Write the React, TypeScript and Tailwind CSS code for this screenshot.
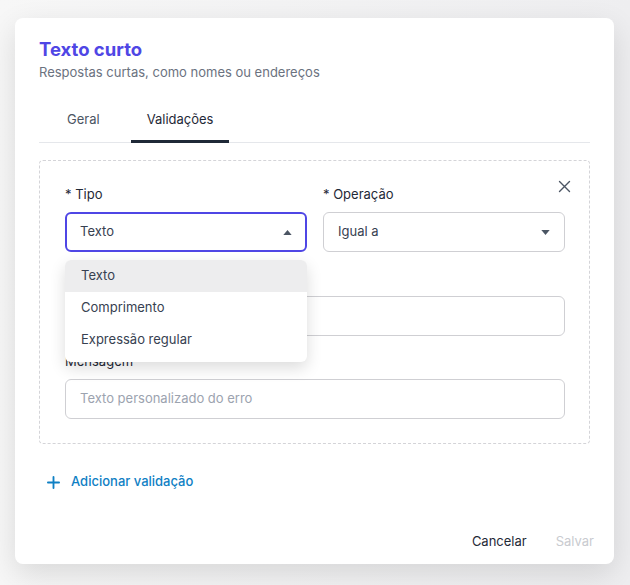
import { useState } from "react";

const font = { fontFamily: "Inter, 'Noto Sans', sans-serif" };

function Caret({ up = false }: { up?: boolean }) {
  return (
    <svg viewBox="0 0 10 6" className="h-[5px] w-[9px] text-[#4b5563]" fill="currentColor">
      {up ? <path d="M0 6 5 0l5 6Z" /> : <path d="M0 0h10L5 6Z" />}
    </svg>
  );
}

function Field({ label, children }: { label?: string; children: React.ReactNode }) {
  return (
    <div className="flex flex-col">
      {label ? (
        <label className="mb-2 text-[13px] leading-5 text-[#1f2937]">{label}</label>
      ) : (
        <div className="mb-2 h-5" />
      )}
      {children}
    </div>
  );
}

export default function App() {
  const [aba, setAba] = useState("Validações");
  const opcoes = ["Texto", "Comprimento", "Expressão regular"];

  return (
    <div
      className="flex h-[585px] w-[630px] items-start bg-gradient-to-r from-[#f7f7f7] to-[#eeeef0] pl-[15px] pt-[18px]"
      style={font}
    >
      <div className="flex h-[546px] w-[599px] flex-col rounded-lg bg-white px-6 pt-[19px] shadow-[0_10px_30px_rgba(0,0,0,0.12)]">
        <h2 className="text-[18.5px] font-bold leading-6 text-[#4f46e5]">Texto curto</h2>
        <p className="mt-[2px] text-[13px] leading-[18px] text-[#6b7280]">
          Respostas curtas, como nomes ou endereços
        </p>

        <div className="mt-4 flex gap-[15px] border-b border-gray-200 pl-3">
          {["Geral", "Validações"].map((t) => (
            <button
              key={t}
              type="button"
              onClick={() => setAba(t)}
              className={`-mb-px border-b-[3px] px-4 pb-[11px] pt-3 text-[13px] leading-5 ${
                aba === t ? "border-[#1f2937] text-[#1f2937]" : "border-transparent text-[#4b5563]"
              }`}
            >
              {t}
            </button>
          ))}
        </div>

        <div className="relative mt-[17px] rounded-sm border border-dashed border-[#d4d4d8] pb-[24px] pl-[25px] pr-6 pt-[23px]">
          <button type="button" className="absolute right-[17px] top-[18px] text-[#4b5563]" aria-label="Remover">
            <svg viewBox="0 0 24 24" className="h-[15px] w-[15px]" fill="none" stroke="currentColor" strokeWidth="2.2" strokeLinecap="round">
              <path d="M4 4l16 16M20 4 4 20" />
            </svg>
          </button>

          <div className="grid grid-cols-2 gap-x-4">
            <Field label="* Tipo">
              <div className="relative">
                <div className="flex h-10 items-center justify-between rounded-md border-2 border-[#4f46e5] pl-[13px] pr-[13px] text-[13px] text-[#374151]">
                  <span>Texto</span>
                  <Caret up />
                </div>
                <div className="absolute left-0 right-0 top-[48px] z-10 rounded-md bg-white pb-[6px] shadow-[0_6px_16px_rgba(0,0,0,0.14)]">
                  {opcoes.map((o, i) => (
                    <div
                      key={o}
                      className={`flex h-8 items-center px-4 text-[13px] text-[#374151] ${
                        i === 0 ? "rounded-t-md bg-[#ededee]" : ""
                      }`}
                    >
                      {o}
                    </div>
                  ))}
                </div>
              </div>
            </Field>
            <Field label="* Operação">
              <div className="flex h-10 items-center justify-between rounded-md border border-[#cfcfd3] pl-[14px] pr-[14px] text-[13px] text-[#374151]">
                <span>Igual a</span>
                <Caret />
              </div>
            </Field>
          </div>

          <div className="mt-4">
            <Field>
              <div className="h-10 rounded-md border border-[#cfcfd3]" />
            </Field>
          </div>

          <div className="mt-[15px]">
            <Field label="Mensagem">
              <div className="flex h-10 items-center rounded-md border border-[#cfcfd3] px-[14px] text-[13px] text-[#9ca3af]">
                Texto personalizado do erro
              </div>
            </Field>
          </div>
        </div>

        <button type="button" className="mt-[22px] flex h-8 items-center gap-[11px] self-start pl-2 text-[13px] font-medium text-[#0f80c4]">
          <svg viewBox="0 0 14 14" className="h-[13px] w-[13px]" fill="none" stroke="currentColor" strokeWidth="2" strokeLinecap="round">
            <path d="M7 1v12M1 7h12" />
          </svg>
          Adicionar validação
        </button>

        <div className="mt-auto mb-[13px] flex justify-end gap-[29px] text-[13px] leading-5">
          <button type="button" className="text-[#1f2937]">Cancelar</button>
          <button type="button" className="-mr-1 text-[#c9cbd0]">Salvar</button>
        </div>
      </div>
    </div>
  );
}
